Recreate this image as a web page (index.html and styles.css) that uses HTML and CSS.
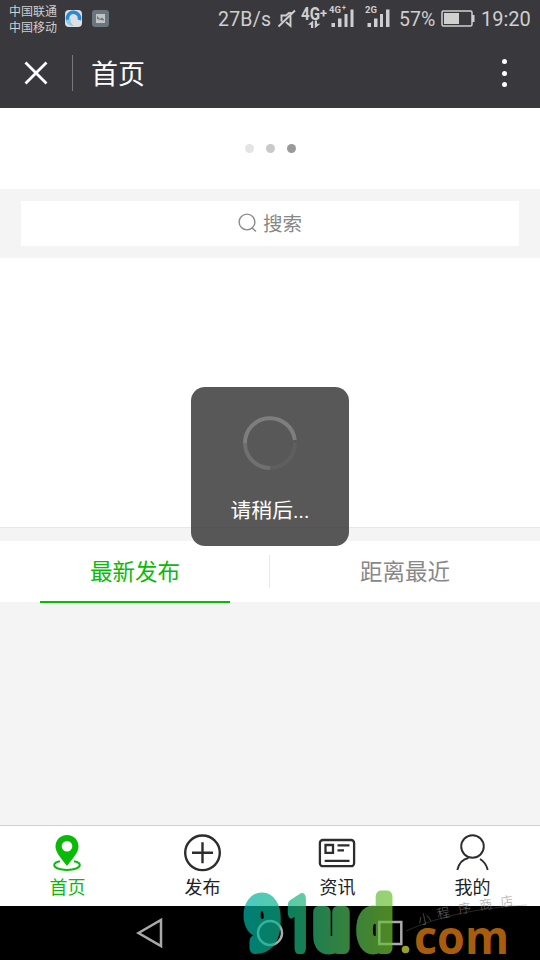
FILE: index.html
```html
<!DOCTYPE html>
<html lang="zh-CN">
<head>
<meta charset="utf-8">
<title>首页</title>
<link rel="stylesheet" href="styles.css">
</head>
<body>
<div class="screen">
  <header class="top">
    <div class="status">
      <div class="carriers"><span>中国联通</span><span>中国移动</span></div>
      <svg class="app" width="17" height="17" viewBox="0 0 17 17"><rect width="17" height="17" rx="4" fill="#dce0e2"/><path d="M3.500 11.500A6 6 0 1 1 14.200 10" fill="none" stroke="#2389da" stroke-width="3.500"/><path d="M1 10Q2 16 9 16Q5 13 5.500 9Z" fill="#8bc9ee"/></svg>
      <svg class="app pic" width="17" height="17" viewBox="0 0 17 17"><rect width="17" height="17" rx="3" fill="#6f7d86"/><path d="M4 4H13V13H4Z" fill="#d0d3d5"/><path d="M5 6L8 9L10 7.500L12 9.500V10.500L9 10L5 9Z" fill="#6f7d86"/></svg>
      <span class="speed">27B/s</span>
      <svg class="indicators" width="116" height="38" viewBox="276 0 116 38">
        <g fill="none" stroke="#cfcfcf" stroke-width="1.900"><path d="M278.500 26.500L295 10.500M289.500 12.500L286 15.500H281.500V21.500M286 22L290.500 26V12"/></g>
        <g fill="#cfcfcf"><path d="M308 24.800L313.200 20.500V28H311V24.800ZM314.800 20.500H317V23.800H320.400L314.800 28.300Z"/><path d="M331.500 23H335V27H331.500ZM338 18.500H341.500V27H338ZM344.500 14H347.500V27H344.500ZM350.500 9.500H353.500V27H350.500ZM367.500 23H371V27H367.500ZM374 18.500H377.500V27H374ZM380 14H383V27H380ZM386 9.500H389.500V27H386Z"/></g>
        <g class="net"><text x="301" y="19.500" textLength="19" lengthAdjust="spacingAndGlyphs" class="big">4G</text><text x="320" y="17.500" class="plus">+</text><text x="329" y="13">4G</text><text x="342" y="10" class="tiny">+</text><text x="365" y="13">2G</text></g>
      </svg>
      <span class="percent">57%</span>
      <svg class="battery" width="34" height="18" viewBox="0 0 34 18"><rect x="1" y="1" width="30" height="15" rx="1.500" fill="none" stroke="#d0d0d0" stroke-width="1.500"/><path d="M3 3H18V14H3ZM31 5H33.500V12H31Z" fill="#d0d0d0"/></svg>
      <span class="clock">19:20</span>
    </div>
    <div class="titlebar">
      <svg class="close" width="24" height="24" viewBox="0 0 24 24"><path d="M1.500 1.500L22.500 22.500M22.500 1.500L1.500 22.500" stroke="#fff" stroke-width="2.800"/></svg>
      <i class="rule"></i>
      <h1>首页</h1>
      <div class="more"><i></i><i></i><i></i></div>
    </div>
  </header>
  <div class="pull"><i></i><i></i><i></i></div>
  <div class="search"><div class="searchbox">
    <svg width="20" height="20" viewBox="0 0 20 20" fill="none" stroke="#8b8b8b" stroke-width="1.400"><circle cx="9" cy="9" r="7.900"/><path d="M14 15L18 18.500"/></svg>
    <span>搜索</span></div></div>
  <div class="banner"></div>
  <div class="tabs"><div class="tab on"><span>最新发布</span></div><div class="tab"><span>距离最近</span></div></div>
  <main class="list"></main>
  <nav class="tabbar">
    <a class="item on"><svg width="40" height="40" viewBox="0 0 40 40"><path d="M20 1C13.300 1 8.500 6 8.500 12.500C8.500 19 15 25 20 32C25 25 31.500 19 31.500 12.500C31.500 6 26.700 1 20 1ZM20 7A5.300 5.300 0 1 1 20 17.600A5.300 5.300 0 1 1 20 7Z" fill="#09bb07" fill-rule="evenodd"/><path d="M13 27.300C9.500 28 7.200 29.500 7.200 31.100C7.200 33.800 12.500 35.900 20 35.900C27.500 35.900 32.800 33.800 32.800 31.100C32.800 29.500 30.500 28 27 27.300" fill="none" stroke="#09bb07" stroke-width="2"/></svg><span>首页</span></a>
    <a class="item"><svg width="40" height="40" viewBox="0 0 40 40" fill="none" stroke="#2d2d2d" stroke-width="2.400"><circle cx="20.500" cy="18.800" r="17.300"/><path d="M10 18.800H31M20.500 8.300V29.300"/></svg><span>发布</span></a>
    <a class="item"><svg width="40" height="40" viewBox="0 0 40 40" fill="none" stroke="#2d2d2d" stroke-width="2.300"><rect x="2.900" y="6" width="34.200" height="26.200" rx="3"/><path d="M8.500 11H16V18.800H8.500ZM20.500 11.300H32.500M20.500 16.300H27M7.700 26.800H32.500"/></svg><span>资讯</span></a>
    <a class="item"><svg width="40" height="40" viewBox="0 0 40 40" fill="none" stroke="#2d2d2d" stroke-width="1.900"><circle cx="20.500" cy="12.500" r="11.300"/><path d="M5.300 36Q8 25.500 16.500 24M28 25Q34 28.500 35.700 36"/></svg><span>我的</span></a>
  </nav>
  <footer class="keys">
    <svg width="540" height="54" viewBox="0 906 540 54" fill="none" stroke="#aaa" stroke-width="2.500"><path d="M138.500 933L161 920V946Z"/><circle cx="270" cy="933" r="12"/><rect x="379.300" y="922" width="22" height="22"/></svg>
  </footer>
  <div class="toast">
    <svg width="56" height="56" viewBox="0 0 56 56" fill="none" stroke-width="4"><path d="M3 28A25 25 0 0 1 52.800 25" stroke="#7e7e7e"/><path d="M3 28A25 25 0 0 0 28 53" stroke="#707070"/><path d="M28 53A25 25 0 0 0 53 28" stroke="#5f5f5f"/></svg>
    <span>请稍后...</span>
  </div>
  <svg class="stamp" width="300" height="75" viewBox="240 885 300 75">
    <defs><linearGradient id="brand" gradientUnits="userSpaceOnUse" x1="243" y1="0" x2="393" y2="0"><stop offset="0" stop-color="#00b5a8"/><stop offset=".3" stop-color="#10b486"/><stop offset=".6" stop-color="#42b763"/><stop offset="1" stop-color="#73c032"/></linearGradient></defs>
    <g class="brand" fill="url(#brand)" stroke="url(#brand)">
      <text x="246" y="948" textLength="33" lengthAdjust="spacingAndGlyphs">9</text>
      <text x="288" y="948" textLength="22" lengthAdjust="spacingAndGlyphs">1</text>
      <text x="315" y="948" textLength="33" lengthAdjust="spacingAndGlyphs">u</text>
      <text x="359" y="948" textLength="32" lengthAdjust="spacingAndGlyphs">d</text>
    </g>
    <circle cx="405.500" cy="949.500" r="3.800" fill="#99a02b"/>
    <text class="com" x="414" y="953.500" textLength="95" lengthAdjust="spacingAndGlyphs">com</text>
    <path d="M406 931Q454 909 527 905" fill="none" stroke="#777" stroke-width=".6" opacity=".55"/>
    <g class="shop"><text transform="translate(419 925) rotate(-12)">小</text><text transform="translate(438 919) rotate(-12)">程</text><text transform="translate(459 914) rotate(-10)">序</text><text transform="translate(480 910) rotate(-8)">商</text><text transform="translate(501 907) rotate(-8)">店</text></g>
  </svg>
</div>
</body>
</html>
```
FILE: styles.css
```css
* { box-sizing: border-box; }
body { margin: 0; font-family: Roboto, "Noto Sans CJK SC", sans-serif; }
svg { display: block; flex: none; }
.screen { position: relative; width: 540px; height: 960px; overflow: hidden; display: flex; flex-direction: column; background: #f4f4f4; }
.top { height: 108px; background: #39383d; color: #fff; }
.status { height: 38px; display: flex; align-items: center; padding: 0 9px; color: #cfcfcf; white-space: nowrap; }
.carriers { width: 48px; margin-right: 8px; padding-top: 1px; font-size: 12px; line-height: 16px; display: flex; flex-direction: column; }
.app { margin-right: 10px; }
.pic { opacity: .9; }
.speed { width: 60px; margin-left: 99px; font-size: 19.500px; letter-spacing: .2px; }
.app, .battery { margin-top: -1px; }
.indicators { margin-left: -2px; }
.net { font: 700 9.500px Roboto, sans-serif; fill: #cfcfcf; }
.big { font-size: 18px; }
.plus { font-size: 13px; }
.tiny { font-size: 7px; }
.percent { width: 42px; margin-left: 7px; font-size: 19.500px; }
.clock { margin-left: 6px; font-size: 20px; }
.titlebar { height: 70px; display: flex; align-items: center; padding: 0 32px 0 24px; }
.rule { width: 1px; height: 36px; margin: 0 18px 0 24px; background: #77767a; }
h1 { margin: 0; padding-top: 3px; font-size: 27px; font-weight: 400; line-height: 40px; }
.more { margin-left: auto; margin-right: 1px; display: flex; flex-direction: column; gap: 6.500px; }
.more i { width: 5px; height: 5px; border-radius: 50%; background: #fff; }
.pull { height: 81px; background: #fff; display: flex; justify-content: center; align-items: center; gap: 12px; }
.pull i { width: 9px; height: 9px; border-radius: 50%; background: #c9c9c9; }
.pull i:first-child { background: #e4e4e4; }
.pull i:last-child { background: #999; }
.search { height: 69px; padding: 12px 21px; }
.searchbox { height: 45px; background: #fff; color: #888; display: flex; align-items: center; justify-content: center; gap: 5px; font-size: 19.500px; line-height: 28px; }
.searchbox span { padding-top: 2px; }
.searchbox svg { margin-top: -1px; }
.banner { height: 270px; background: #fff; border-bottom: 1px solid #e7e7e7; }
.tabs { height: 61px; margin-top: 13px; background: #fff; display: flex; }
.tab { position: relative; width: 270px; text-align: center; font-size: 22.500px; line-height: 62px; color: #888; }
.tab.on { color: #09bb07; }
.tab.on::before { content: ""; position: absolute; right: 0; top: 14px; width: 1px; height: 33px; background: #e9e9e9; }
.tab.on::after { content: ""; position: absolute; left: 40px; bottom: -1px; width: 190px; height: 2px; background: #09bb07; }
.list { flex: 1; }
.tabbar { height: 81px; border-top: 1px solid #d2d2d2; background: #fff; display: flex; }
.item { width: 135px; padding-top: 8px; display: flex; flex-direction: column; align-items: center; color: #222; font-size: 18px; line-height: 28px; }
.item svg { margin-left: -1px; }
.item.on { color: #09bb07; }
.keys { height: 54px; background: #000; }
.toast { position: absolute; left: 191px; top: 387px; width: 158px; height: 159px; padding-top: 28px; border-radius: 14px; background: rgba(60, 60, 60, .855); color: #fff; display: flex; flex-direction: column; align-items: center; gap: 26px; font-size: 20.800px; line-height: 28px; }
.stamp { position: absolute; left: 240px; top: 885px; }
.brand { font: 500 68px Roboto, sans-serif; stroke-width: 12px; stroke-linejoin: round; opacity: .7; }
.com { font: 700 47px "Open Sans", sans-serif; fill: #a85c0c; }
.shop { font: 300 13px "Noto Sans CJK SC", sans-serif; fill: #888; opacity: .75; }
```
